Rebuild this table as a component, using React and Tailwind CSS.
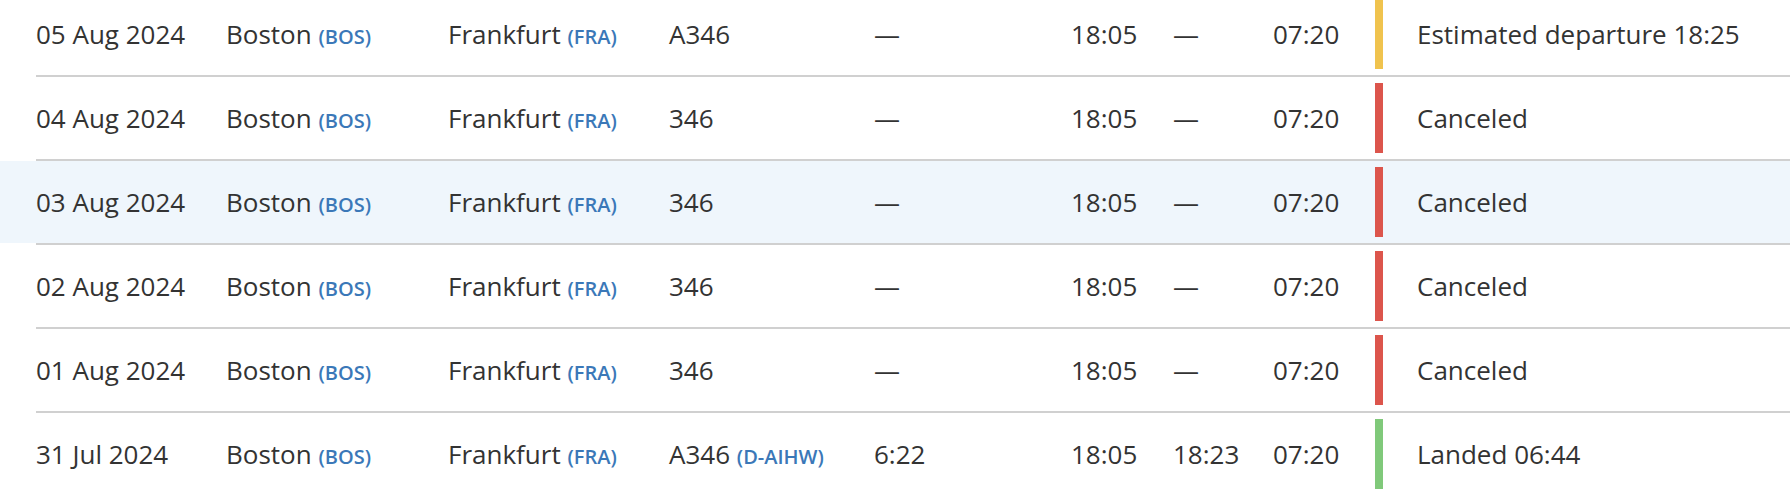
import React from "react"

const flights = [
  { date: "05 Aug 2024", ac: "A346", reg: "", dur: "—", atd: "—", status: "Estimated departure 18:25", bar: "bg-[#f0c34e]" },
  { date: "04 Aug 2024", ac: "346", reg: "", dur: "—", atd: "—", status: "Canceled", bar: "bg-[#dc554c]" },
  { date: "03 Aug 2024", ac: "346", reg: "", dur: "—", atd: "—", status: "Canceled", bar: "bg-[#dc554c]", hover: true },
  { date: "02 Aug 2024", ac: "346", reg: "", dur: "—", atd: "—", status: "Canceled", bar: "bg-[#dc554c]" },
  { date: "01 Aug 2024", ac: "346", reg: "", dur: "—", atd: "—", status: "Canceled", bar: "bg-[#dc554c]" },
  { date: "31 Jul 2024", ac: "A346", reg: "D-AIHW", dur: "6:22", atd: "18:23", status: "Landed 06:44", bar: "bg-[#80c97a]" },
]

const Code = ({ children }) => (
  <span className="text-[20px] font-semibold text-[#3b78b8]">({children})</span>
)

const Row = ({ f }) => (
  <div className={f.hover ? "bg-[#eff6fc]" : ""}>
    <div className="ml-[36px] flex h-[82px] items-center whitespace-nowrap">
      <div className="w-[190px]">{f.date}</div>
      <div className="w-[222px]">Boston <Code>BOS</Code></div>
      <div className="w-[221px]">Frankfurt <Code>FRA</Code></div>
      <div className="w-[205px]">{f.ac}{f.reg && <> <Code>{f.reg}</Code></>}</div>
      <div className="w-[197px]">{f.dur}</div>
      <div className="w-[102px]">18:05</div>
      <div className="w-[100px]">{f.atd}</div>
      <div className="w-[102px]">07:20</div>
      <div className={"h-[70px] w-[8px] " + f.bar}></div>
      <div className="pl-[34px]">{f.status}</div>
    </div>
  </div>
)

const App = () => {
  return (
    <div className="h-[494px] w-[1790px] overflow-hidden bg-white">
      <div className="-mt-[7px] text-[26px] text-[#333333]" style={{ fontFamily: '"Open Sans", sans-serif' }}>
        {flights.map((f, i) => (
          <div key={i}>
            <Row f={f} />
            {i < flights.length - 1 && <div className="ml-[36px] h-[2px] bg-[#d0d0d0]"></div>}
          </div>
        ))}
      </div>
    </div>
  )
}

export default App
